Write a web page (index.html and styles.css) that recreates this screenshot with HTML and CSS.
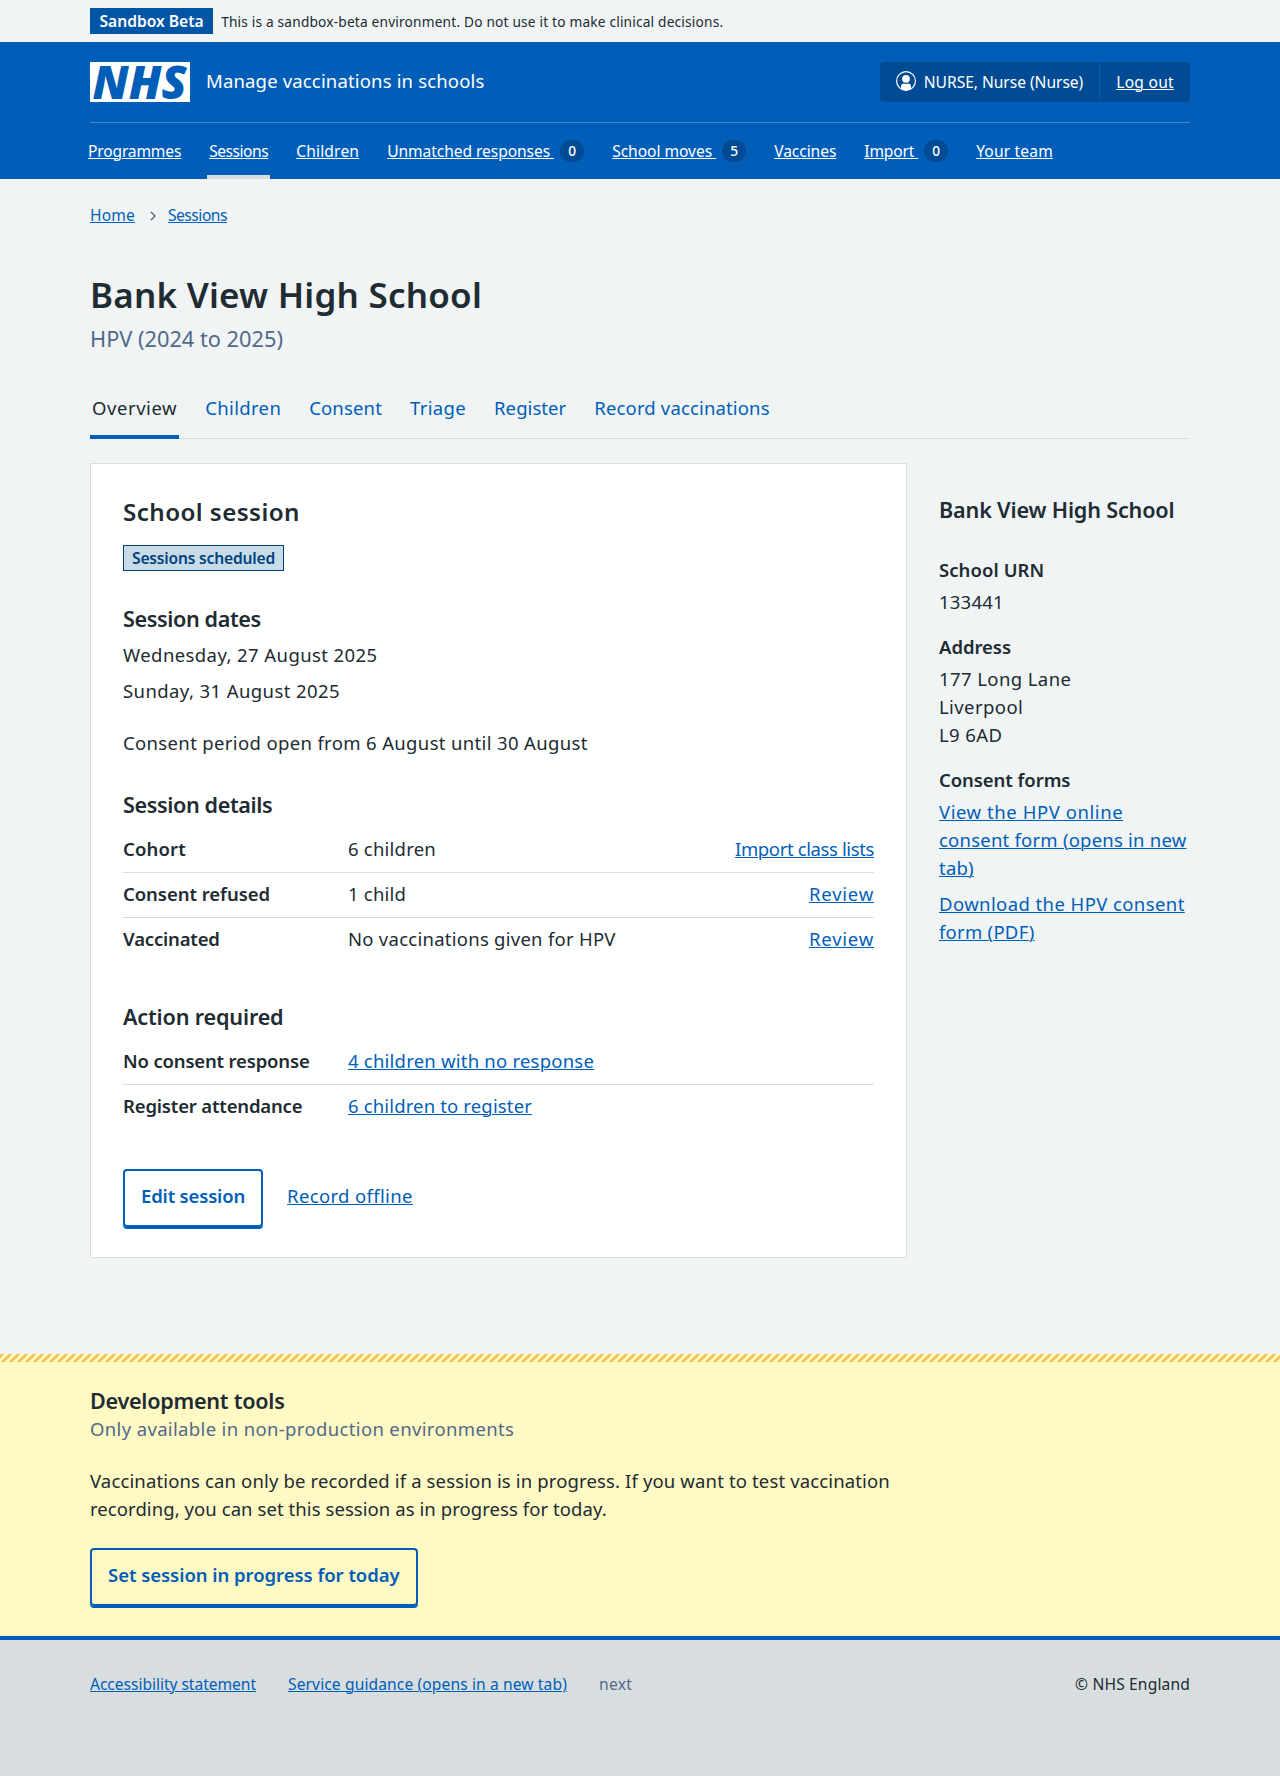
FILE: index.html
```
<!DOCTYPE html>
<html lang="en">
<head>
<meta charset="utf-8">
<title>Bank View High School – Manage vaccinations in schools</title>
<link rel="stylesheet" href="styles.css">
</head>
<body>
<div class="env">
  <div class="container env-row">
    <strong class="env-tag">Sandbox Beta</strong>
    <span class="env-text">This is a sandbox-beta environment. Do not use it to make clinical decisions.</span>
  </div>
</div>

<header class="header">
  <div class="container">
    <div class="header-top">
      <a class="brand" href="#">
        <svg class="logo" width="100" height="40" viewBox="0 0 100 40" role="img" aria-label="NHS">
          <rect width="100" height="40" fill="#fff"/>
          <text class="logo-text" x="2.5" y="36.5" textLength="94" lengthAdjust="spacingAndGlyphs">NHS</text>
        </svg>
        <span class="service">Manage vaccinations in schools</span>
      </a>
      <div class="account">
        <span class="account-item">
          <svg class="account-icon" width="20" height="20" viewBox="0 0 20 20" aria-hidden="true">
            <circle cx="10" cy="10" r="9.4" fill="none" stroke="#fff" stroke-width="1.2"/>
            <circle cx="10" cy="7.8" r="3.9" fill="#fff"/>
            <path d="M5 17.8v-2.2c0-2 1.3-3.1 3-3.1.8.5 3.2.5 4 0 1.7 0 3 1.1 3 3.1v2.2c-3 2-7 2-10 0z" fill="#fff"/>
          </svg>
          <span class="ls-n0">NURSE, Nurse (Nurse)</span>
        </span>
        <span class="account-item"><a class="ls-p2" href="#">Log out</a></span>
      </div>
    </div>
    <nav class="nav">
      <a class="nav-item" href="#"><span class="u ls-n2">Programmes</span></a>
      <a class="nav-item current" href="#"><span class="u ls-n5">Sessions</span></a>
      <a class="nav-item" href="#"><span class="u ls-p1">Children</span></a>
      <a class="nav-item" href="#"><span class="u ls-n1">Unmatched responses </span><span class="count">0</span></a>
      <a class="nav-item" href="#"><span class="u ls-n0">School moves </span><span class="count">5</span></a>
      <a class="nav-item" href="#"><span class="u ls-n1">Vaccines</span></a>
      <a class="nav-item" href="#"><span class="u ls-n2">Import </span><span class="count">0</span></a>
      <a class="nav-item" href="#"><span class="u ls-p1">Your team</span></a>
    </nav>
  </div>
</header>

<main class="container main">
  <nav class="crumbs">
    <a class="ls-p1" href="#">Home</a>
    <svg class="chevron" width="6" height="10" viewBox="0 0 6 10" aria-hidden="true"><path d="M1 1l4 4-4 4" fill="none" stroke="#4c6272" stroke-width="1.3"/></svg>
    <a class="ls-n5" href="#">Sessions</a>
  </nav>

  <h1 class="title">Bank View High School</h1>
  <p class="caption">HPV (2024 to 2025)</p>

  <nav class="tabs">
    <a class="tab selected ls-p5" href="#">Overview</a>
    <a class="tab ls-p3" href="#">Children</a>
    <a class="tab ls-p1" href="#">Consent</a>
    <a class="tab ls-p3" href="#">Triage</a>
    <a class="tab ls-p0" href="#">Register</a>
    <a class="tab ls-p1" href="#">Record vaccinations</a>
  </nav>

  <div class="columns">
    <section class="card">
      <h2 class="heading-m">School session</h2>
      <strong class="tag">Sessions scheduled</strong>

      <h3 class="heading-s dates-heading ls-n4">Session dates</h3>
      <ul class="dates">
        <li class="ls-p4">Wednesday, 27 August 2025</li>
        <li class="ls-p4">Sunday, 31 August 2025</li>
      </ul>
      <p class="period ls-p3">Consent period open from 6 August until 30 August</p>

      <h3 class="heading-s ls-n4">Session details</h3>
      <dl class="summary">
        <div class="row"><dt class="ls-p1">Cohort</dt><dd>6 children</dd><dd class="act"><a class="ls-n4" href="#">Import class lists</a></dd></div>
        <div class="row"><dt>Consent refused</dt><dd>1 child</dd><dd class="act"><a class="ls-p8" href="#">Review</a></dd></div>
        <div class="row"><dt class="ls-n2">Vaccinated</dt><dd class="ls-p2">No vaccinations given for HPV</dd><dd class="act"><a class="ls-p8" href="#">Review</a></dd></div>
      </dl>

      <h3 class="heading-s action-heading ls-n2">Action required</h3>
      <dl class="summary">
        <div class="row"><dt class="ls-n2">No consent response</dt><dd><a href="#">4 children with no response</a></dd></div>
        <div class="row"><dt class="ls-n2">Register attendance</dt><dd><a class="ls-p1" href="#">6 children to register</a></dd></div>
      </dl>

      <div class="buttons">
        <button class="button ls-n2" type="button">Edit session</button>
        <a class="ls-p3" href="#">Record offline</a>
      </div>
    </section>

    <aside class="side">
      <h2 class="heading-s ls-n2">Bank View High School</h2>
      <dl class="facts">
        <dt class="ls-p0">School URN</dt>
        <dd>133441</dd>
        <dt>Address</dt>
        <dd class="ls-p4">177 Long Lane<br>Liverpool<br>L9 6AD</dd>
        <dt class="ls-n1">Consent forms</dt>
        <dd><a href="#"><span class="ls-p5">View the HPV online</span><br>consent form (opens in new<br>tab)</a></dd>
        <dd class="second ls-p4"><a href="#">Download the HPV consent<br><span class="ls-p2">form (PDF)</span></a></dd>
      </dl>
    </aside>
  </div>
</main>

<section class="dev">
  <div class="container">
    <h2 class="dev-heading">Development tools</h2>
    <p class="dev-caption ls-p3">Only available in non-production environments</p>
    <p class="dev-text">Vaccinations can only be recorded if a session is in progress. If you want to test vaccination<br><span class="ls-p0">recording, you can set this session as in progress for today.</span></p>
    <button class="button ls-n0" type="button">Set session in progress for today</button>
  </div>
</section>

<footer class="footer">
  <div class="container footer-row">
    <a class="ls-n0" href="#">Accessibility statement</a>
    <a class="service-link" href="#">Service guidance (opens in a new tab)</a>
    <span class="muted ls-p3">next</span>
    <span class="copyright ls-p1">© NHS England</span>
  </div>
</footer>
</body>
</html>
```
FILE: styles.css
```
* { box-sizing: border-box; }

body {
  margin: 0;
  background: #f0f4f5;
  color: #212b32;
  font: 400 18.5px/28px "Noto Sans", "Open Sans", sans-serif;
  letter-spacing: 0.22px;
}

h1, h2, h3, p, ul, dl, dd { margin: 0; }
ul { padding: 0; list-style: none; }

a {
  color: #005eb8;
  text-decoration: underline;
  text-decoration-thickness: 1px;
  text-underline-offset: 1px;
}

.container { width: 1100px; margin: 0 auto; }

/* Tracking */
.ls-n5 { letter-spacing: -0.48px; }
.ls-n4 { letter-spacing: -0.38px; }
.ls-n2 { letter-spacing: -0.17px; }
.ls-n1 { letter-spacing: -0.07px; }
.ls-n0 { letter-spacing: -0.04px; }
.ls-p0 { letter-spacing: 0.07px; }
.ls-p1 { letter-spacing: 0.15px; }
.ls-p2 { letter-spacing: 0.26px; }
.ls-p3 { letter-spacing: 0.35px; }
.ls-p4 { letter-spacing: 0.41px; }
.ls-p5 { letter-spacing: 0.56px; }
.ls-p8 { letter-spacing: 0.77px; }

/* Environment bar */
.env { height: 42px; padding-top: 8px; }
.env-row { display: flex; gap: 8px; align-items: baseline; }
.env-tag {
  padding: 0 9.5px;
  background: #0055a5;
  color: #fff;
  font-size: 15.6px;
  font-weight: 600;
  line-height: 26px;
  letter-spacing: 0;
}
.env-text { font-size: 13.7px; line-height: 20px; letter-spacing: 0.19px; }

/* Header */
.header { background: #005eb8; color: #fff; }
.header a { color: #fff; }
.header-top {
  display: flex;
  align-items: center;
  justify-content: space-between;
  height: 81px;
  border-bottom: 1px solid #3f87cb;
}
.brand { display: flex; align-items: center; gap: 16px; }
.header .brand { text-decoration: none; }
.logo { display: block; overflow: visible; }
.logo-text {
  font: italic 900 46px "Noto Sans", "Open Sans", sans-serif;
  letter-spacing: 0;
  fill: #005eb8;
}
.service { padding-bottom: 2px; letter-spacing: 0.16px; }
.account {
  display: flex;
  height: 40px;
  border-radius: 4px;
  background: #004b93;
  font-size: 15.6px;
  letter-spacing: 0;
}
.account-item { display: flex; align-items: center; gap: 8px; padding: 0 16px; }
.account-item + .account-item { border-left: 1px solid #005eb8; }
.account-icon { margin-bottom: 2px; }

.nav { display: flex; gap: 24px; height: 56px; margin-left: -4px; font-size: 15.6px; letter-spacing: 0; }
.nav-item {
  display: flex;
  align-items: center;
  gap: 6px;
  padding: 0 2px;
}
.header .nav-item { text-decoration: none; }
.current { box-shadow: inset 0 -4px #d8dde0; }
.u {
  white-space: pre;
  text-decoration: underline;
  text-decoration-thickness: 1px;
  text-underline-offset: 1px;
}
.count {
  width: 24px;
  height: 22px;
  border-radius: 11px;
  background: #004b93;
  font-size: 13.7px;
  font-weight: 500;
  line-height: 22px;
  text-align: center;
}

/* Page heading */
.crumbs {
  display: flex;
  align-items: center;
  padding-top: 24px;
  font-size: 15.6px;
  line-height: 24px;
}
.chevron { margin: 1px 12px 0 15px; }
.title {
  margin-top: 46px;
  font-size: 35px;
  font-weight: 600;
  line-height: 44px;
  letter-spacing: 0.22px;
}
.caption {
  margin-top: 6px;
  color: #52698a;
  font-size: 21.8px;
  line-height: 32px;
  letter-spacing: -0.02px;
}

/* Tabs */
.tabs {
  display: flex;
  gap: 24px;
  height: 45px;
  margin-top: 39px;
  border-bottom: 1px solid #d8dde0;
}
.tab { height: 45px; padding: 0 2px; text-decoration: none; }
.selected { border-bottom: 4px solid #005eb8; color: #212b32; }

/* Content */
.columns { display: grid; grid-template-columns: 817px 251px; gap: 32px; margin-top: 24px; }
.card {
  height: 795px;
  padding: 32px;
  border: 1px solid #d8dde0;
  background: #fff;
}
.heading-m { font-size: 24.2px; font-weight: 600; line-height: 32px; letter-spacing: 0.42px; }
.heading-s { font-size: 21.6px; font-weight: 600; line-height: 32px; }
.tag {
  display: block;
  width: max-content;
  margin-top: 17px;
  padding: 0 8px;
  border: 1px solid #004281;
  background: #c7dce6;
  color: #004281;
  font-size: 15.6px;
  font-weight: 600;
  line-height: 24px;
  letter-spacing: -0.19px;
}
.dates-heading { margin-top: 32px; }
.dates { display: flex; flex-direction: column; gap: 8px; margin-top: 6px; }
.period { margin: 24px 0 32px; }
.summary { margin-top: 7px; }
.row { display: flex; padding: 7px 0 9px; }
.row:not(:last-child) { border-bottom: 1px solid #d8dde0; }
dt { font-weight: 600; letter-spacing: -0.05px; }
.row dt { flex: 0 0 225px; }
.act { margin-left: auto; }
.action-heading { margin-top: 39px; }
.buttons { display: flex; align-items: center; gap: 24px; margin-top: 40px; }
.buttons a { padding-bottom: 4px; }

.button {
  height: 58px;
  padding: 0 16px 4px;
  border: 2px solid #005eb8;
  border-radius: 4px;
  background: transparent;
  box-shadow: 0 2px 0 #005eb8;
  color: #005eb8;
  font-family: inherit;
  font-size: 18.5px;
  font-weight: 600;
  line-height: 28px;
}

.side { padding-top: 31px; }
.facts { margin-top: 30px; }
.facts dt { margin-top: 17px; }
.facts dd { margin-top: 4px; }
.facts .second { margin-top: 8px; }

/* Development tools */
.dev {
  height: 282px;
  margin-top: 96px;
  padding-top: 33px;
  background: linear-gradient(135deg, #f7c15c 25%, #fff9c4 25% 50%, #f7c15c 50% 75%, #fff9c4 75%) 0 0 / 8px 8px repeat-x #fff9c4;
}
.dev-heading { font-size: 21.6px; font-weight: 600; line-height: 28px; letter-spacing: -0.27px; }
.dev-caption { color: #52698a; }
.dev-text { margin: 24px 0 25px; letter-spacing: 0.14px; }

/* Footer */
.footer { height: 140px; padding-top: 32px; border-top: 4px solid #005eb8; background: #d8dde0; }
.footer-row { display: flex; gap: 32px; font-size: 15.6px; line-height: 24px; letter-spacing: 0; }
.service-link { letter-spacing: 0.11px; }
.muted { color: #52698a; }
.copyright { margin-left: auto; }
```
